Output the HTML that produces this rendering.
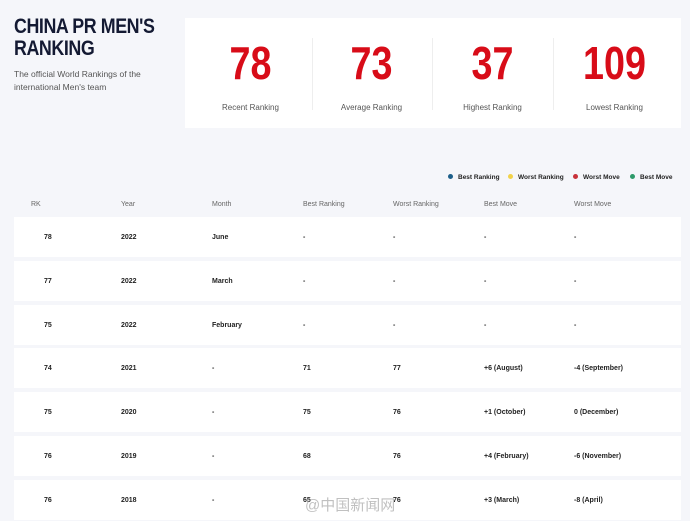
<!DOCTYPE html>
<html><head><meta charset="utf-8"><style>
*{margin:0;padding:0;box-sizing:border-box}
body{width:690px;height:521px;background:#f5f6fa;font-family:"Liberation Sans",sans-serif;position:relative;overflow:hidden;color:#222}
.t{position:absolute;left:14px;top:16px;font-size:21px;line-height:22px;font-weight:bold;color:#141a33;letter-spacing:-0.5px;transform:scaleX(0.85);transform-origin:left}
.sub{position:absolute;left:14px;top:68px;font-size:8.5px;line-height:13px;color:#555}
.card{position:absolute;left:185px;top:18px;width:496px;height:110px;background:#fff}
.st{position:absolute;top:0;width:121px;height:110px;text-align:center}
.st b{display:block;margin-top:22px;font-size:46px;line-height:46px;color:#d80c18;transform:scaleX(0.82)}
.st span{display:block;margin-top:17px;font-size:8px;color:#555}
.sep{position:absolute;top:20px;width:1px;height:72px;background:#eee}
.leg{position:absolute;top:174px;font-size:6.5px;font-weight:bold;color:#222}
.leg i{display:inline-block;width:5px;height:5px;border-radius:50%;margin-right:5px;vertical-align:0}
.h{position:absolute;top:201px;font-size:7px;color:#666}
.row{position:absolute;left:14px;width:667px;height:40px;background:#fff}
.c{position:absolute;top:17px;font-size:7px;font-weight:bold;color:#222}
.wm{position:absolute;left:305px;top:494px;font-size:15px;color:rgba(150,150,150,.6);font-family:"Liberation Sans","Noto Sans CJK SC",sans-serif}
</style></head><body>
<div class="t">CHINA PR MEN'S<br>RANKING</div>
<div class="sub">The official World Rankings of the<br>international Men's team</div>
<div class="card">
<div class="st" style="left:5px"><b>78</b><span>Recent Ranking</span></div>
<div class="sep" style="left:127px"></div>
<div class="st" style="left:126px"><b>73</b><span>Average Ranking</span></div>
<div class="sep" style="left:247px"></div>
<div class="st" style="left:247px"><b>37</b><span>Highest Ranking</span></div>
<div class="sep" style="left:368px"></div>
<div class="st" style="left:369px"><b>109</b><span>Lowest Ranking</span></div>
</div>
<div class="leg" style="left:448px"><i style="background:#1d5f8a"></i>Best Ranking</div>
<div class="leg" style="left:508px"><i style="background:#f2d24a"></i>Worst Ranking</div>
<div class="leg" style="left:573px"><i style="background:#c8323a"></i>Worst Move</div>
<div class="leg" style="left:630px"><i style="background:#2e9a6a"></i>Best Move</div>
<div class="h" style="left:31px">RK</div><div class="h" style="left:121px">Year</div><div class="h" style="left:212px">Month</div><div class="h" style="left:303px">Best Ranking</div><div class="h" style="left:393px">Worst Ranking</div><div class="h" style="left:484px">Best Move</div><div class="h" style="left:574px">Worst Move</div>
<div class="row" style="top:217px"><div class="c" style="left:30px">78</div><div class="c" style="left:107px">2022</div><div class="c" style="left:198px">June</div><div class="c" style="left:289px">-</div><div class="c" style="left:379px">-</div><div class="c" style="left:470px">-</div><div class="c" style="left:560px">-</div></div>
<div class="row" style="top:261px"><div class="c" style="left:30px">77</div><div class="c" style="left:107px">2022</div><div class="c" style="left:198px">March</div><div class="c" style="left:289px">-</div><div class="c" style="left:379px">-</div><div class="c" style="left:470px">-</div><div class="c" style="left:560px">-</div></div>
<div class="row" style="top:305px"><div class="c" style="left:30px">75</div><div class="c" style="left:107px">2022</div><div class="c" style="left:198px">February</div><div class="c" style="left:289px">-</div><div class="c" style="left:379px">-</div><div class="c" style="left:470px">-</div><div class="c" style="left:560px">-</div></div>
<div class="row" style="top:348px"><div class="c" style="left:30px">74</div><div class="c" style="left:107px">2021</div><div class="c" style="left:198px">-</div><div class="c" style="left:289px">71</div><div class="c" style="left:379px">77</div><div class="c" style="left:470px">+6 (August)</div><div class="c" style="left:560px">-4 (September)</div></div>
<div class="row" style="top:392px"><div class="c" style="left:30px">75</div><div class="c" style="left:107px">2020</div><div class="c" style="left:198px">-</div><div class="c" style="left:289px">75</div><div class="c" style="left:379px">76</div><div class="c" style="left:470px">+1 (October)</div><div class="c" style="left:560px">0 (December)</div></div>
<div class="row" style="top:436px"><div class="c" style="left:30px">76</div><div class="c" style="left:107px">2019</div><div class="c" style="left:198px">-</div><div class="c" style="left:289px">68</div><div class="c" style="left:379px">76</div><div class="c" style="left:470px">+4 (February)</div><div class="c" style="left:560px">-6 (November)</div></div>
<div class="row" style="top:480px"><div class="c" style="left:30px">76</div><div class="c" style="left:107px">2018</div><div class="c" style="left:198px">-</div><div class="c" style="left:289px">65</div><div class="c" style="left:379px">76</div><div class="c" style="left:470px">+3 (March)</div><div class="c" style="left:560px">-8 (April)</div></div>
<div class="wm">@中国新闻网</div>
</body></html>
